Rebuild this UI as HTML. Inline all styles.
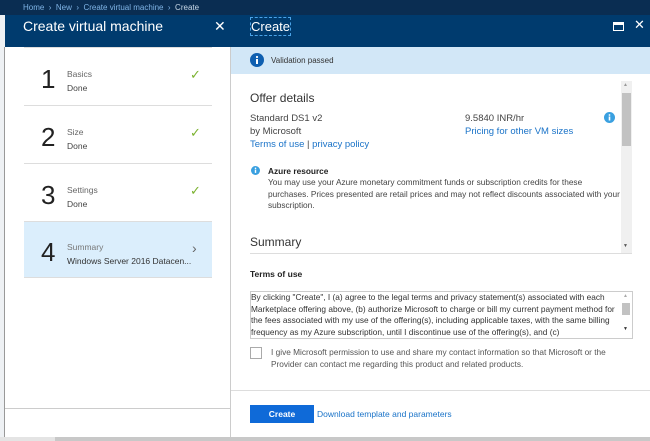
<!DOCTYPE html>
<html><head><style>
*{margin:0;padding:0;box-sizing:border-box}
body{width:650px;height:441px;overflow:hidden;background:#fff;font-family:"Liberation Sans",sans-serif;position:relative;color:#333}
.a{position:absolute}
.lnk{color:#1a73c8}
</style></head><body>
<div class="a" style="left:0;top:0;width:650px;height:47px;background:#0e3a66"></div>
<div class="a" style="left:0;top:0;width:650px;height:15px;background:#0a2d52"></div>
<div class="a" style="left:23px;top:3px;font-size:8px;color:#7fb4e6">Home &nbsp;›&nbsp; New &nbsp;›&nbsp; Create virtual machine &nbsp;›&nbsp; <span style="color:#c8d8e8">Create</span></div>
<div class="a" style="left:0;top:15px;width:5px;height:426px;background:#eef1f4"></div>
<div class="a" style="left:4px;top:47px;width:1px;height:390px;background:#999"></div>
<div class="a" style="left:5px;top:15px;width:226px;height:32px;background:#003b6e"></div>
<div class="a" style="left:23px;top:18px;font-size:14px;color:#fff">Create virtual machine</div>
<div class="a" style="left:214px;top:18px;font-size:14px;color:#fff">✕</div>
<div class="a" style="left:231px;top:15px;width:419px;height:32px;background:#003b6e"></div>
<div class="a" style="left:250px;top:17px;font-size:13px;color:#fff;border:1px dashed #4aa3e8;padding:1px 0">Create</div>
<div class="a" style="left:613px;top:22px;width:11px;height:9px;border:1.5px solid #fff;border-top-width:3px"></div>
<div class="a" style="left:634px;top:17px;font-size:13px;color:#fff">✕</div>
<div class="a" style="left:5px;top:47px;width:226px;height:390px;background:#fff;border-right:1px solid #ccc"></div>
<div class="a" style="left:24px;top:47px;width:188px;height:1px;background:#ddd"></div>
<div class="a" style="left:24px;top:105px;width:188px;height:1px;background:#ddd"></div>
<div class="a" style="left:24px;top:163px;width:188px;height:1px;background:#ddd"></div>
<div class="a" style="left:24px;top:221px;width:188px;height:57px;background:#dbeefc;border-top:1px solid #ddd;border-bottom:1px solid #ddd"></div>
<div class="a" style="left:41px;top:64px;font-size:26px;color:#222">1</div>
<div class="a" style="left:67px;top:69px;font-size:8.5px;color:#666">Basics</div>
<div class="a" style="left:67px;top:83px;font-size:8.5px;color:#444">Done</div>
<div class="a" style="left:190px;top:67px;font-size:13px;color:#7bb22f">✓</div>
<div class="a" style="left:41px;top:122px;font-size:26px;color:#222">2</div>
<div class="a" style="left:67px;top:127px;font-size:8.5px;color:#666">Size</div>
<div class="a" style="left:67px;top:141px;font-size:8.5px;color:#444">Done</div>
<div class="a" style="left:190px;top:125px;font-size:13px;color:#7bb22f">✓</div>
<div class="a" style="left:41px;top:180px;font-size:26px;color:#222">3</div>
<div class="a" style="left:67px;top:185px;font-size:8.5px;color:#666">Settings</div>
<div class="a" style="left:67px;top:199px;font-size:8.5px;color:#444">Done</div>
<div class="a" style="left:190px;top:183px;font-size:13px;color:#7bb22f">✓</div>
<div class="a" style="left:41px;top:237px;font-size:26px;color:#222">4</div>
<div class="a" style="left:67px;top:242px;font-size:8.5px;color:#777">Summary</div>
<div class="a" style="left:67px;top:256px;font-size:8.5px;color:#333">Windows Server 2016 Datacen...</div>
<div class="a" style="left:192px;top:240px;font-size:14px;color:#666">›</div>
<div class="a" style="left:5px;top:408px;width:226px;height:1px;background:#ccc"></div>
<div class="a" style="left:231px;top:47px;width:419px;height:27px;background:#d2e7f7"></div>
<svg class="a" style="left:250px;top:53px" width="14" height="14"><circle cx="7" cy="7" r="7" fill="#0f5fb0"/><rect x="6" y="6" width="2" height="5" fill="#fff"/><circle cx="7" cy="4" r="1.1" fill="#fff"/></svg>
<div class="a" style="left:271px;top:56px;font-size:8px;color:#333">Validation passed</div>
<div class="a" style="left:621px;top:81px;width:11px;height:172px;background:#f0f0f0"></div>
<div class="a" style="left:622px;top:93px;width:9px;height:53px;background:#c2c2c2"></div>
<div class="a" style="left:623px;top:82px;font-size:5px;color:#999">▲</div>
<div class="a" style="left:623px;top:243px;font-size:5px;color:#555">▼</div>
<div class="a" style="left:250px;top:91px;font-size:12px;color:#333">Offer details</div>
<div class="a" style="left:250px;top:112px;font-size:9.5px;color:#444;line-height:13px">Standard DS1 v2<br>by Microsoft<br><span class="lnk">Terms of use</span> | <span class="lnk">privacy policy</span></div>
<div class="a" style="left:465px;top:112px;font-size:9.5px;color:#444;line-height:13px">9.5840 INR/hr<br><span class="lnk">Pricing for other VM sizes</span></div>
<svg class="a" style="left:604px;top:112px" width="11" height="11"><circle cx="5.5" cy="5.5" r="5.5" fill="#3aa0e0"/><rect x="4.7" y="4.5" width="1.6" height="4" fill="#fff"/><circle cx="5.5" cy="3" r="0.9" fill="#fff"/></svg>
<svg class="a" style="left:251px;top:166px" width="9" height="9"><circle cx="4.5" cy="4.5" r="4.5" fill="#3aa0e0"/><rect x="3.8" y="3.6" width="1.4" height="3.3" fill="#fff"/><circle cx="4.5" cy="2.3" r="0.8" fill="#fff"/></svg>
<div class="a" style="left:268px;top:166px;font-size:8.3px;color:#222;font-weight:bold">Azure resource</div>
<div class="a" style="left:268px;top:177px;width:352px;font-size:8.3px;color:#444;line-height:11.5px">You may use your Azure monetary commitment funds or subscription credits for these purchases. Prices presented are retail prices and may not reflect discounts associated with your subscription.</div>
<div class="a" style="left:250px;top:235px;font-size:12px;color:#333">Summary</div>
<div class="a" style="left:250px;top:253px;width:382px;height:1px;background:#ddd"></div>
<div class="a" style="left:250px;top:269px;font-size:8.5px;color:#222;font-weight:bold">Terms of use</div>
<div class="a" style="left:250px;top:291px;width:383px;height:48px;border:1px solid #ccc;overflow:hidden"></div>
<div class="a" style="left:251px;top:292px;width:372px;font-size:8.3px;color:#333;line-height:11.5px;height:46px;overflow:hidden">By clicking "Create", I (a) agree to the legal terms and privacy statement(s) associated with each Marketplace offering above, (b) authorize Microsoft to charge or bill my current payment method for the fees associated with my use of the offering(s), including applicable taxes, with the same billing frequency as my Azure subscription, until I discontinue use of the offering(s), and (c)</div>
<div class="a" style="left:622px;top:303px;width:8px;height:12px;background:#c2c2c2"></div>
<div class="a" style="left:623px;top:293px;font-size:5px;color:#aaa">▲</div>
<div class="a" style="left:623px;top:326px;font-size:5px;color:#333">▼</div>
<div class="a" style="left:250px;top:347px;width:12px;height:12px;border:1px solid #aaa"></div>
<div class="a" style="left:271px;top:347px;width:358px;font-size:8.3px;color:#555;line-height:11.5px">I give Microsoft permission to use and share my contact information so that Microsoft or the Provider can contact me regarding this product and related products.</div>
<div class="a" style="left:231px;top:390px;width:419px;height:1px;background:#ddd"></div>
<div class="a" style="left:250px;top:405px;width:64px;height:18px;background:#0f6ad8;color:#fff;font-size:8.5px;font-weight:bold;text-align:center;line-height:18px">Create</div>
<div class="a lnk" style="left:317px;top:409px;font-size:8.5px">Download template and parameters</div>
<div class="a" style="left:0;top:437px;width:650px;height:4px;background:#e4e4e4"></div>
<div class="a" style="left:55px;top:437px;width:595px;height:4px;background:#c8c8c8"></div>
</body></html>
